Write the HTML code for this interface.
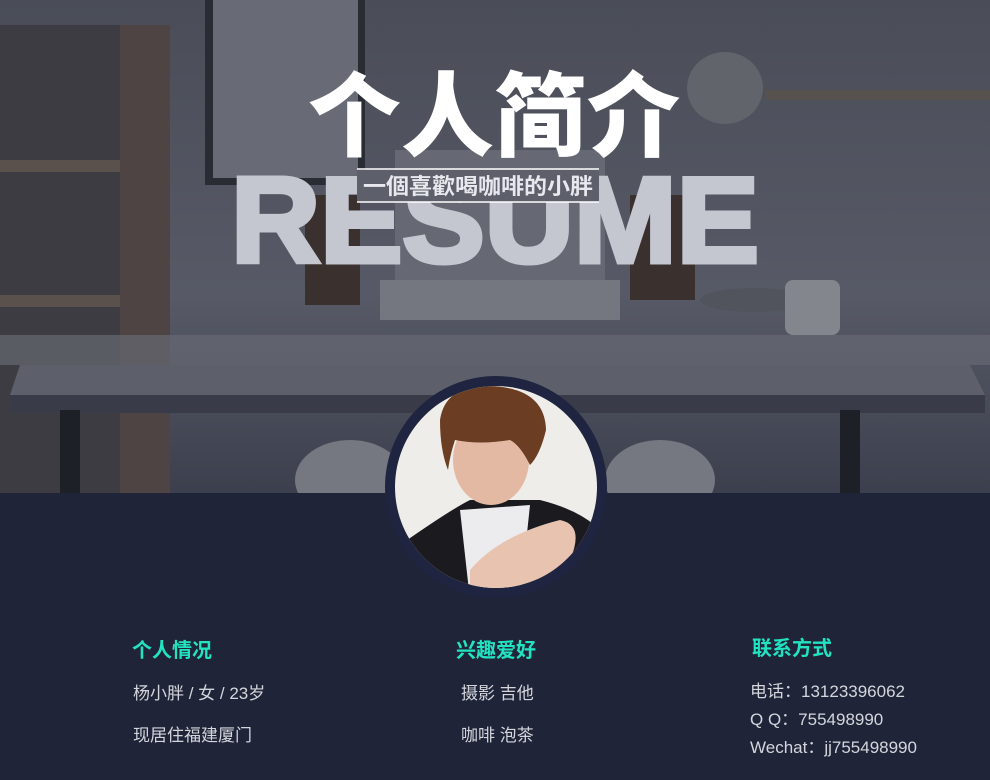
<!DOCTYPE html>
<html><head><meta charset="utf-8"><style>
*{margin:0;padding:0}
body{width:990px;height:780px;overflow:hidden;background:#1f2439;position:relative;font-family:"Liberation Sans","Noto Sans CJK SC",sans-serif}
.h{position:absolute;color:#22e3c0;font-size:20px;font-weight:bold}
.t{position:absolute;color:#d4d6dc;font-size:17px;white-space:nowrap}
</style></head><body>
<svg width="990" height="780" style="position:absolute;left:0;top:0">
<defs>
<linearGradient id="bg" x1="0" y1="0" x2="0" y2="1">
<stop offset="0" stop-color="#4a4d58"/><stop offset="0.6" stop-color="#575a66"/><stop offset="1" stop-color="#3c3f4d"/>
</linearGradient>
<clipPath id="c"><circle cx="496" cy="487" r="101"/></clipPath>
</defs>
<rect width="990" height="493" fill="url(#bg)"/>
<rect x="0" y="25" width="170" height="470" fill="#3d3c42"/>
<rect x="120" y="25" width="50" height="470" fill="#4e4443"/>
<rect x="0" y="160" width="120" height="12" fill="#5a504c"/>
<rect x="0" y="295" width="120" height="12" fill="#5a504c"/>
<rect x="205" y="0" width="160" height="185" fill="#2a2c33"/>
<rect x="213" y="0" width="145" height="178" fill="#686b75"/>
<polygon points="20,365 970,365 985,395 10,395" fill="#5d606a"/>
<rect x="0" y="335" width="990" height="30" fill="#666973" opacity="0.7"/>
<rect x="10" y="395" width="975" height="18" fill="#393c48"/>
<rect x="60" y="410" width="20" height="85" fill="#1e2028"/>
<rect x="840" y="410" width="20" height="85" fill="#1e2028"/>
<rect x="395" y="150" width="210" height="130" fill="#666974"/>
<rect x="380" y="280" width="240" height="40" fill="#74777f"/>
<rect x="305" y="195" width="55" height="110" fill="#3a302e"/>
<rect x="630" y="195" width="65" height="105" fill="#3a302e"/>
<ellipse cx="725" cy="88" rx="38" ry="36" fill="#62646c"/>
<ellipse cx="755" cy="300" rx="55" ry="12" fill="#51545d"/>
<rect x="765" y="90" width="225" height="10" fill="#57524e"/>
<rect x="785" y="280" width="55" height="55" rx="8" fill="#84868d"/>
<ellipse cx="350" cy="480" rx="55" ry="40" fill="#757881"/>
<ellipse cx="660" cy="480" rx="55" ry="40" fill="#757881"/>
<rect x="0" y="493" width="990" height="287" fill="#1f2439"/>
<text x="495" y="262" text-anchor="middle" font-family="Liberation Sans" font-weight="bold" font-size="122" fill="#c4c7d0" stroke="#c4c7d0" stroke-width="5" stroke-linejoin="miter" textLength="528" lengthAdjust="spacingAndGlyphs">RESUME</text>
<rect x="357" y="170" width="242" height="32" fill="#5d606b"/>
<line x1="357" y1="169" x2="599" y2="169" stroke="#fff" stroke-width="1.5"/>
<line x1="357" y1="202" x2="599" y2="202" stroke="#fff" stroke-width="1.5"/>
<text x="478" y="194" text-anchor="middle" font-family="Noto Sans CJK SC" font-weight="bold" font-size="22" fill="#e8e9ee" textLength="230" lengthAdjust="spacingAndGlyphs">一個喜歡喝咖啡的小胖</text>
<text x="494" y="149" text-anchor="middle" font-family="Noto Sans CJK SC" font-weight="900" font-size="92" fill="#fff" textLength="372" lengthAdjust="spacingAndGlyphs">个人简介</text>
<circle cx="496" cy="487" r="111" fill="#1f2540"/>
<circle cx="496" cy="487" r="101" fill="#efedea"/>
<g clip-path="url(#c)">
<path d="M400 545 Q450 510 470 500 L540 500 Q580 510 600 530 L600 600 L400 600Z" fill="#1b1b1f"/>
<path d="M460 510 L530 505 L520 600 L470 600Z" fill="#ecebee"/>
<ellipse cx="491" cy="460" rx="38" ry="45" fill="#e4b9a3"/>
<path d="M440 420 Q445 385 490 386 Q545 388 546 430 Q540 455 530 465 Q520 445 510 440 Q480 445 455 440 Q450 455 448 470 Q440 450 440 420Z" fill="#6b3d22"/>
<path d="M470 570 Q500 535 560 520 Q585 525 570 560 Q540 590 510 600 L470 600Z" fill="#e8c4b0"/>
</g>
</svg>
<div class="h" style="left:132px;top:634px">个人情况</div>
<div class="t" style="left:133px;top:679px">杨小胖 / 女 / 23岁</div>
<div class="t" style="left:133px;top:721px">现居住福建厦门</div>
<div class="h" style="left:456px;top:634px">兴趣爱好</div>
<div class="t" style="left:461px;top:679px">摄影 吉他</div>
<div class="t" style="left:461px;top:721px">咖啡 泡茶</div>
<div class="h" style="left:752px;top:632px">联系方式</div>
<div class="t" style="left:750px;top:677px">电话：13123396062</div>
<div class="t" style="left:750px;top:705px">Q Q：755498990</div>
<div class="t" style="left:750px;top:733px">Wechat：jj755498990</div>
</body></html>
